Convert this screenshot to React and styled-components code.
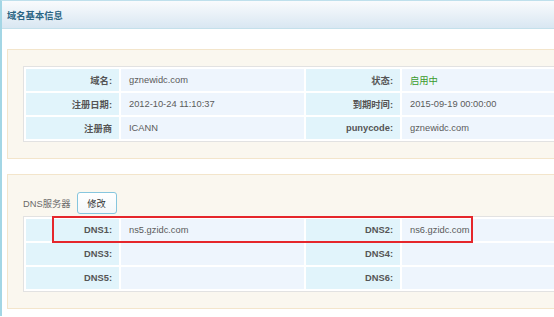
import React from 'react'
import styled, { createGlobalStyle } from 'styled-components'

const GlobalStyle = createGlobalStyle`
  body {
    margin: 0;
    background: #fff;
    overflow: hidden;
    font-family: "Liberation Sans", Arial, "Noto Sans CJK SC", sans-serif;
  }
`

const Frame = styled.div`
  width: 554px;
  height: 316px;
  overflow: hidden;
  border-left: 2px solid #a3d6e5;
  border-top: 1px solid #bfe0ec;
  box-sizing: border-box;
`

const Inner = styled.div`
  width: 660px;
`

const Header = styled.div`
  height: 27px;
  display: flex;
  align-items: center;
  padding-left: 5px;
  background: linear-gradient(to bottom, #f9fbfd, #d9e7f2);
  border-bottom: 1px solid #c4e0eb;
`

const Title = styled.span`
  font-family: "Noto Sans CJK SC", sans-serif;
  font-size: 9.3px;
  font-weight: bold;
  color: #2b6584;
`

const Body = styled.div`
  padding: 20px 0 0 5px;
`

const Panel = styled.div`
  border: 1px solid #f3e5cb;
  background: #faf7ef;
  padding: 16px 15px;
  margin-top: ${p => (p.$first ? 0 : 15)}px;
  padding-top: ${p => (p.$first ? 16 : 17)}px;
`

const TableWrap = styled.div`
  position: relative;
`

const Table = styled.table`
  width: 588px;
  border: 1px solid #e2e2e2;
  border-spacing: 2px;
  background: #fff;
  table-layout: fixed;
`

const Label = styled.td`
  width: ${p => p.$w}px;
  height: 22px;
  padding: 0 7px 0 0;
  background: #e1f4fb;
  text-align: right;
  font-size: 9.3px;
  font-weight: bold;
  color: #555;
  font-family: "Liberation Sans", Arial, "Noto Sans CJK SC", sans-serif;
  box-sizing: border-box;
`

const Value = styled.td`
  width: ${p => (p.$w ? `${p.$w}px` : 'auto')};
  height: 22px;
  padding: 0 0 0 8px;
  background: #eef5fd;
  font-size: 9.3px;
  color: ${p => (p.$ok ? '#3a9a2c' : '#5a5a5a')};
  font-family: "Liberation Sans", Arial, "Noto Sans CJK SC", sans-serif;
  box-sizing: border-box;
`

const ToolRow = styled.div`
  display: flex;
  align-items: center;
  gap: 6px;
  margin-bottom: 2px;
`

const ToolText = styled.span`
  font-size: 9.3px;
  color: #6a6a6a;
  font-family: "Liberation Sans", Arial, "Noto Sans CJK SC", sans-serif;
`

const Button = styled.button`
  width: 40px;
  height: 22px;
  padding: 0;
  border: 1px solid #86c6de;
  border-radius: 3px;
  background: linear-gradient(to bottom, #ffffff, #f4f8fa);
  font-size: 9.3px;
  color: #333;
  font-family: "Noto Sans CJK SC", sans-serif;
`

const Highlight = styled.div`
  position: absolute;
  left: 29px;
  top: 0;
  width: 421px;
  height: 27px;
  border: 2px solid #e5262b;
  box-sizing: border-box;
  pointer-events: none;
`

const info = [
  ['域名:', 'gznewidc.com', '状态:', '启用中', true],
  ['注册日期:', '2012-10-24 11:10:37', '到期时间:', '2015-09-19 00:00:00'],
  ['注册商', 'ICANN', 'punycode:', 'gznewidc.com'],
]

const dns = [
  ['DNS1:', 'ns5.gzidc.com', 'DNS2:', 'ns6.gzidc.com'],
  ['DNS3:', '', 'DNS4:', ''],
  ['DNS5:', '', 'DNS6:', ''],
]

const Rows = ({ rows }) => (
  <tbody>
    {rows.map(([l1, v1, l2, v2, ok]) => (
      <tr key={l1}>
        <Label $w={93}>{l1}</Label>
        <Value $w={183}>{v1}</Value>
        <Label $w={94}>{l2}</Label>
        <Value $ok={ok}>{v2}</Value>
      </tr>
    ))}
  </tbody>
)

export default function App() {
  return (
    <>
      <GlobalStyle />
      <Frame>
        <Inner>
          <Header>
            <Title>域名基本信息</Title>
          </Header>
          <Body>
            <Panel $first>
              <Table>
                <Rows rows={info} />
              </Table>
            </Panel>
            <Panel>
              <ToolRow>
                <ToolText>DNS服务器</ToolText>
                <Button>修改</Button>
              </ToolRow>
              <TableWrap>
                <Table>
                  <Rows rows={dns} />
                </Table>
                <Highlight />
              </TableWrap>
            </Panel>
          </Body>
        </Inner>
      </Frame>
    </>
  )
}
